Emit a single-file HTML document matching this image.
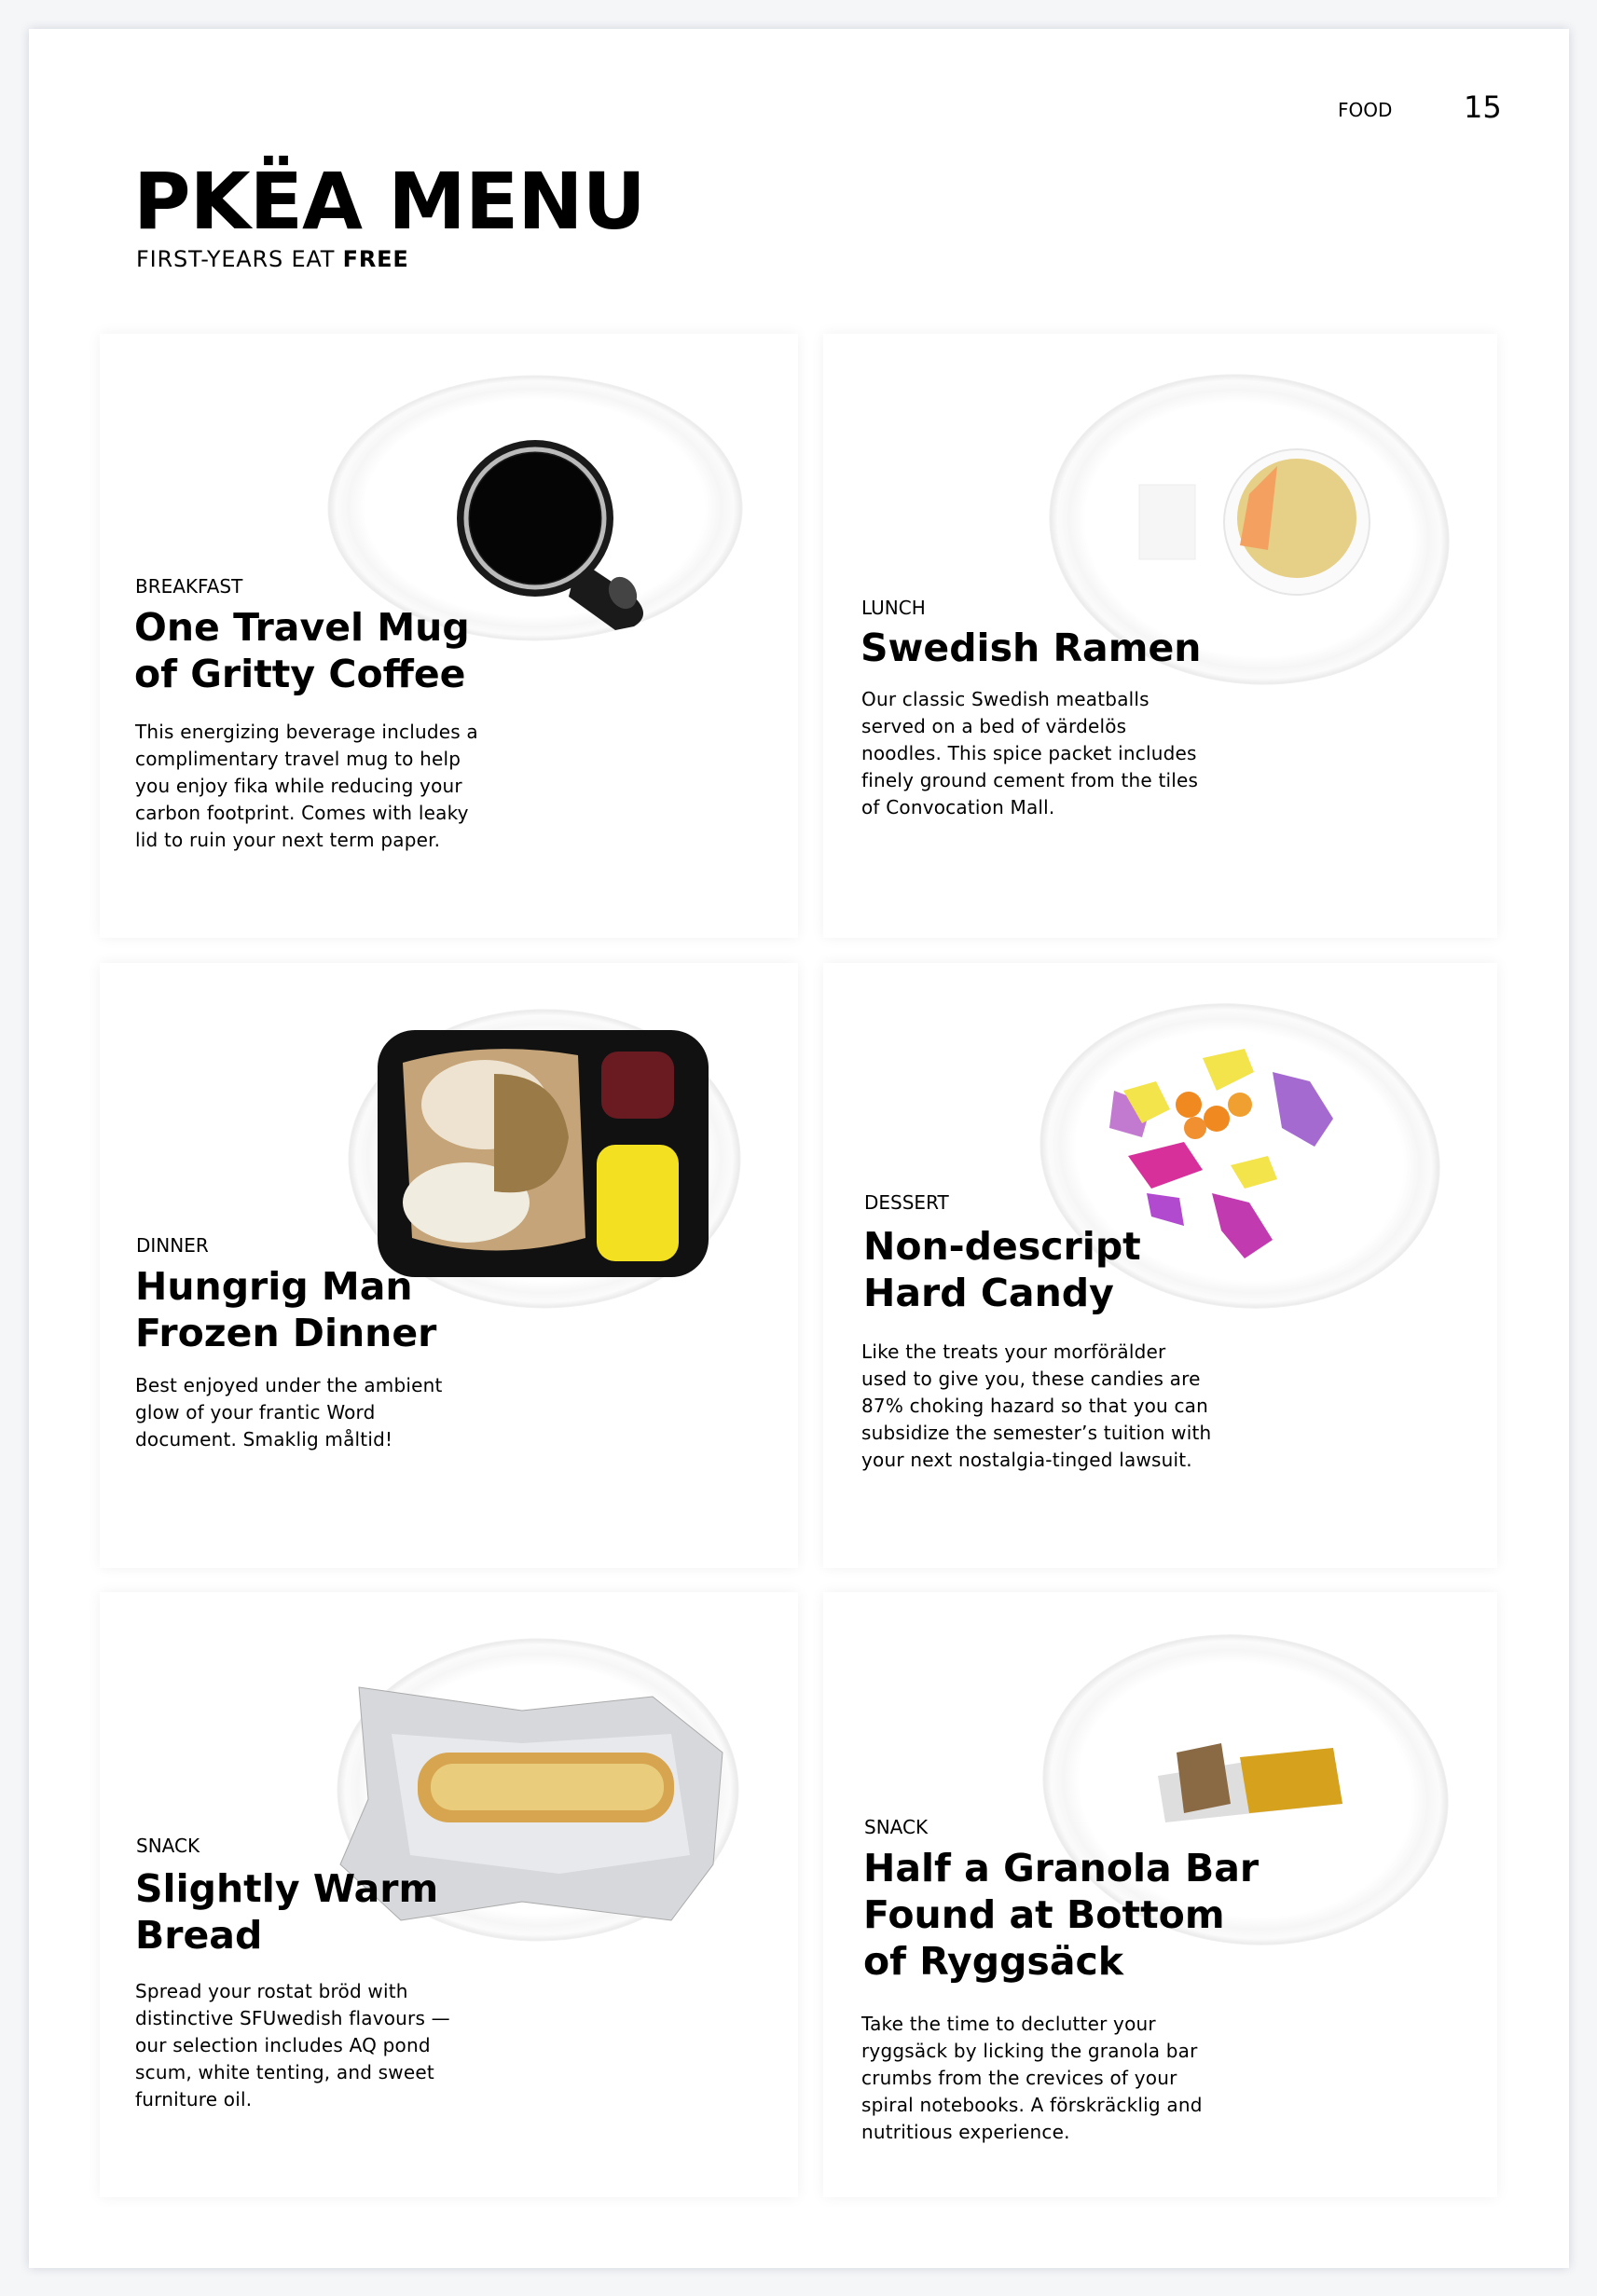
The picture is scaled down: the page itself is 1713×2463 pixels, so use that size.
<!DOCTYPE html>
<html><head><meta charset="utf-8"><style>
html,body{margin:0;padding:0}
body{width:1713px;height:2463px;position:relative;background:#f5f6f8;font-family:"DejaVu Sans","Liberation Sans",sans-serif;color:#000;overflow:hidden}
.page{position:absolute;left:31px;top:31px;width:1652px;height:2402px;background:#fff;box-shadow:0 0 10px rgba(150,160,175,.4)}
.card{position:absolute;background:#fff;box-shadow:0 0 14px rgba(0,0,0,.06)}
.t{position:absolute;white-space:nowrap}
.lab{font-size:20px;line-height:24px}
.h{font-weight:bold;font-size:41px;line-height:50px}
.b{font-size:20px;line-height:29px;letter-spacing:0.2px}
svg{position:absolute;left:0;top:0}
</style></head><body>
<div class="page"></div>
<div class="t" style="left:1435px;top:106px;font-size:20px;line-height:24px">FOOD</div>
<div class="t" style="left:1570px;top:96px;font-size:32px;line-height:38px">15</div>
<div class="t" style="left:143px;top:166px;font-size:84px;line-height:100px;font-weight:bold;letter-spacing:-1px">PKËA MENU</div>
<div class="t" style="left:146px;top:264px;font-size:24px;line-height:28px;letter-spacing:0.8px">FIRST-YEARS EAT <b>FREE</b></div>

<div class="card" style="left:107px;top:358px;width:749px;height:648px"></div>
<div class="card" style="left:883px;top:358px;width:723px;height:648px"></div>
<div class="card" style="left:107px;top:1033px;width:749px;height:649px"></div>
<div class="card" style="left:883px;top:1033px;width:723px;height:649px"></div>
<div class="card" style="left:107px;top:1708px;width:749px;height:649px"></div>
<div class="card" style="left:883px;top:1708px;width:723px;height:649px"></div>

<svg width="1713" height="2463">
<defs>
<radialGradient id="pl" cx="50%" cy="50%" r="50%"><stop offset="0.82" stop-color="#ffffff"/><stop offset="0.9" stop-color="#f6f6f6"/><stop offset="0.96" stop-color="#fbfbfb"/><stop offset="1" stop-color="#e9e9e9"/></radialGradient>
</defs>
<g fill="url(#pl)" stroke="#f0f0f0" stroke-width="1">
<ellipse cx="574" cy="545" rx="222" ry="142"/>
<ellipse cx="1340" cy="568" rx="215" ry="165" transform="rotate(8 1340 568)"/>
<ellipse cx="584" cy="1243" rx="210" ry="160"/>
<ellipse cx="1330" cy="1240" rx="215" ry="162" transform="rotate(8 1330 1240)"/>
<ellipse cx="577" cy="1920" rx="215" ry="162"/>
<ellipse cx="1336" cy="1920" rx="218" ry="165" transform="rotate(8 1336 1920)"/>
</g>
<path d="M620 600 L680 640 Q700 660 680 672 L660 676 L610 640 Z" fill="#1a1a1a"/>
<ellipse cx="668" cy="636" rx="14" ry="18" fill="#444" transform="rotate(-30 668 636)"/>
<circle cx="574" cy="556" r="84" fill="#1a1a1a"/>
<circle cx="574" cy="556" r="74" fill="none" stroke="#bbb" stroke-width="5"/>
<circle cx="574" cy="556" r="70" fill="#050505"/>
<rect x="1222" y="520" width="60" height="80" fill="#f6f6f6" stroke="#ececec"/>
<circle cx="1391" cy="560" r="78" fill="#fafafa" stroke="#e6e6e6" stroke-width="2"/>
<circle cx="1391" cy="556" r="64" fill="#e6cf86"/>
<path d="M1340 530 L1370 500 L1360 590 L1330 585 Z" fill="#f3a060"/>
<rect x="405" y="1105" width="355" height="265" rx="40" fill="#111"/>
<path d="M432 1140 Q520 1115 620 1132 L628 1328 Q530 1355 442 1328 Z" fill="#c4a478"/>
<ellipse cx="520" cy="1185" rx="68" ry="48" fill="#eee3d0"/>
<ellipse cx="500" cy="1290" rx="68" ry="43" fill="#f1ece0"/>
<path d="M530 1152 Q600 1152 610 1220 Q600 1288 530 1278 Z" fill="#9a7b48"/>
<rect x="645" y="1128" width="78" height="72" rx="18" fill="#6a1b22"/>
<rect x="640" y="1228" width="88" height="125" rx="20" fill="#f3e020"/>
<g>
<path d="M1195 1170 l40 15 l-10 35 l-35 -10 z" fill="#c27ad0"/>
<path d="M1205 1170 l35 -10 l15 30 l-30 15 z" fill="#f2e44a"/>
<path d="M1290 1135 l45 -10 l10 25 l-40 20 z" fill="#f2e44a"/>
<circle cx="1275" cy="1185" r="14" fill="#f08a20"/>
<circle cx="1305" cy="1200" r="14" fill="#f08a20"/>
<circle cx="1330" cy="1185" r="13" fill="#f0a030"/>
<circle cx="1282" cy="1210" r="12" fill="#f09030"/>
<path d="M1365 1150 l40 10 l25 40 l-20 30 l-35 -20 z" fill="#a46ad0"/>
<path d="M1210 1240 l60 -15 l20 30 l-55 20 z" fill="#d8309a"/>
<path d="M1300 1280 l40 10 l25 40 l-30 20 l-25 -30 z" fill="#c23ab0"/>
<path d="M1320 1250 l40 -10 l10 25 l-35 10 z" fill="#f2e44a"/>
<path d="M1230 1280 l35 5 l5 30 l-35 -10 z" fill="#b24ad0"/>
</g>
<path d="M385 1810 L560 1835 L700 1820 L775 1880 L765 2000 L720 2060 L560 2040 L430 2060 L365 2000 L395 1930 Z" fill="#d6d8dc" stroke="#aaa"/>
<path d="M420 1860 L560 1870 L720 1860 L740 1990 L600 2010 L440 1990 Z" fill="#e8e9ec"/>
<rect x="448" y="1880" width="275" height="75" rx="34" fill="#d7a550"/>
<rect x="462" y="1892" width="250" height="50" rx="24" fill="#e9cd7c"/>
<path d="M1242 1905 L1430 1875 L1440 1935 L1250 1955 Z" fill="#dedede"/>
<path d="M1330 1885 L1430 1875 L1440 1935 L1340 1945 Z" fill="#d6a11c"/>
<path d="M1262 1880 L1310 1870 L1320 1935 L1270 1945 Z" fill="#8a6a45"/>
</svg>

<div class="t lab" style="left:145px;top:617px">BREAKFAST</div>
<div class="t h" style="left:144px;top:648px">One Travel Mug<br>of Gritty Coffee</div>
<div class="t b" style="left:145px;top:771px">This energizing beverage includes a<br>complimentary travel mug to help<br>you enjoy fika while reducing your<br>carbon footprint. Comes with leaky<br>lid to ruin your next term paper.</div>
<div class="t lab" style="left:924px;top:640px">LUNCH</div>
<div class="t h" style="left:923px;top:670px">Swedish Ramen</div>
<div class="t b" style="left:924px;top:736px">Our classic Swedish meatballs<br>served on a bed of värdelös<br>noodles. This spice packet includes<br>finely ground cement from the tiles<br>of Convocation Mall.</div>
<div class="t lab" style="left:146px;top:1324px">DINNER</div>
<div class="t h" style="left:145px;top:1355px">Hungrig Man<br>Frozen Dinner</div>
<div class="t b" style="left:145px;top:1472px">Best enjoyed under the ambient<br>glow of your frantic Word<br>document. Smaklig måltid!</div>
<div class="t lab" style="left:927px;top:1278px">DESSERT</div>
<div class="t h" style="left:926px;top:1312px">Non-descript<br>Hard Candy</div>
<div class="t b" style="left:924px;top:1436px">Like the treats your morförälder<br>used to give you, these candies are<br>87% choking hazard so that you can<br>subsidize the semester’s tuition with<br>your next nostalgia-tinged lawsuit.</div>
<div class="t lab" style="left:146px;top:1968px">SNACK</div>
<div class="t h" style="left:145px;top:2001px">Slightly Warm<br>Bread</div>
<div class="t b" style="left:145px;top:2122px">Spread your rostat bröd with<br>distinctive SFUwedish flavours —<br>our selection includes AQ pond<br>scum, white tenting, and sweet<br>furniture oil.</div>
<div class="t lab" style="left:927px;top:1948px">SNACK</div>
<div class="t h" style="left:926px;top:1979px">Half a Granola Bar<br>Found at Bottom<br>of Ryggsäck</div>
<div class="t b" style="left:924px;top:2157px">Take the time to declutter your<br>ryggsäck by licking the granola bar<br>crumbs from the crevices of your<br>spiral notebooks. A förskräcklig and<br>nutritious experience.</div>
</body></html>
